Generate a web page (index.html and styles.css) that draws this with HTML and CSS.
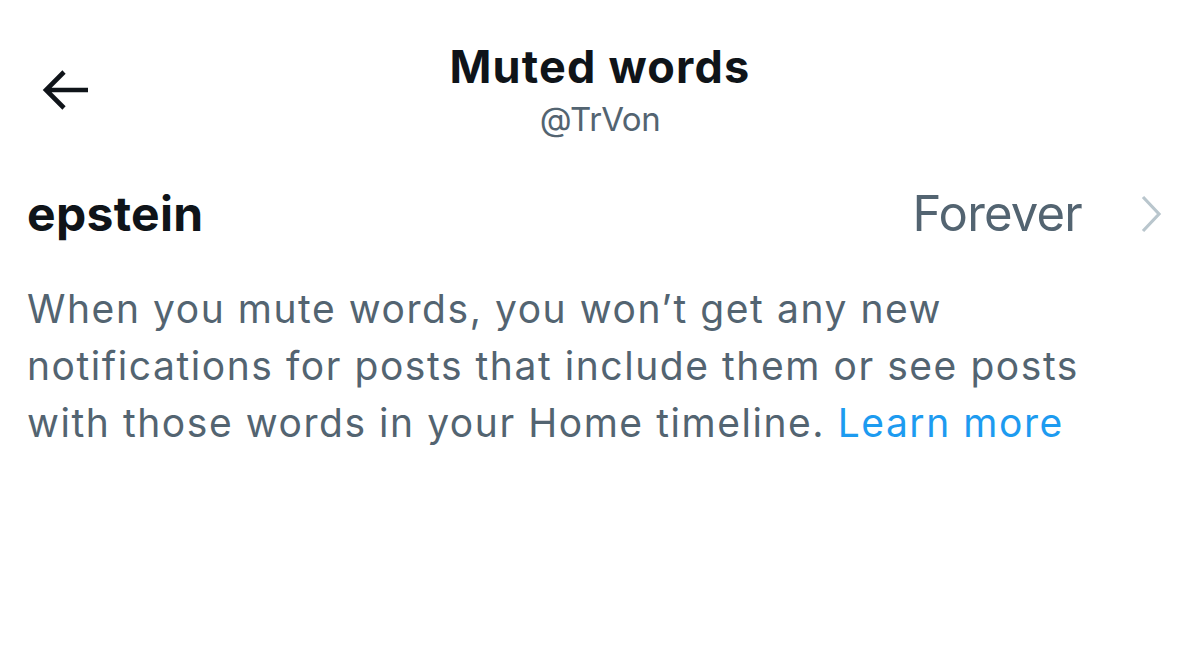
FILE: index.html
```html
<!DOCTYPE html>
<html>
<head>
<meta charset="utf-8">
<link rel="stylesheet" href="styles.css">
</head>
<body>
<div class="page">
  <header class="header">
    <button class="back" aria-label="Back">
      <svg width="48" height="44" viewBox="0 0 48 44"><path d="M46 22H4M22 4L4 22l18 18" fill="none" stroke="#0f1419" stroke-width="4.6"/></svg>
    </button>
    <div class="titles">
      <div class="title">Muted words</div>
      <div class="handle">@TrVon</div>
    </div>
  </header>
  <div class="row">
    <div class="word">epstein</div>
    <div class="dur">Forever</div>
    <svg class="chev" width="22" height="38" viewBox="0 0 22 38"><path d="M3 2l16 17L3 36" fill="none" stroke="#b9c6cd" stroke-width="3.2"/></svg>
  </div>
  <p class="desc">When you mute words, you won’t get any new<br>notifications for posts that include them or see posts<br>with those words in your Home timeline. <a class="link" href="#">Learn more</a></p>
</div>
</body>
</html>
```
FILE: styles.css
```css
html, body { margin: 0; padding: 0; background: #fff; }
body { font-family: Inter, "Noto Sans", sans-serif; color: #0f1419; }
.page { width: 1200px; height: 663px; overflow: hidden; }
.header { position: relative; display: flex; justify-content: center; padding-top: 40px; }
.back { position: absolute; left: 42px; top: 68px; border: 0; background: none; padding: 0; margin: 0; }
.back svg { display: block; }
.titles { display: flex; flex-direction: column; align-items: center; }
.title { font-size: 45px; font-weight: 700; line-height: 54px; letter-spacing: 1.2px; }
.handle { font-size: 33px; color: #536471; line-height: 42px; margin-top: 4px; letter-spacing: -0.4px; }
.row { display: flex; align-items: center; padding: 44px 38px 0 27px; }
.word { font-size: 48px; font-weight: 700; line-height: 60px; flex: 1; letter-spacing: 0.3px; }
.dur { font-size: 49px; color: #536471; line-height: 60px; margin-right: 58px; letter-spacing: -0.8px; }
.chev { display: block; }
.desc { margin: 36px 0 0 0; padding: 0 27px; font-size: 39px; line-height: 57px; color: #536471; letter-spacing: 1.55px; white-space: nowrap; }
.link { color: #1d9bf0; text-decoration: none; }
```
